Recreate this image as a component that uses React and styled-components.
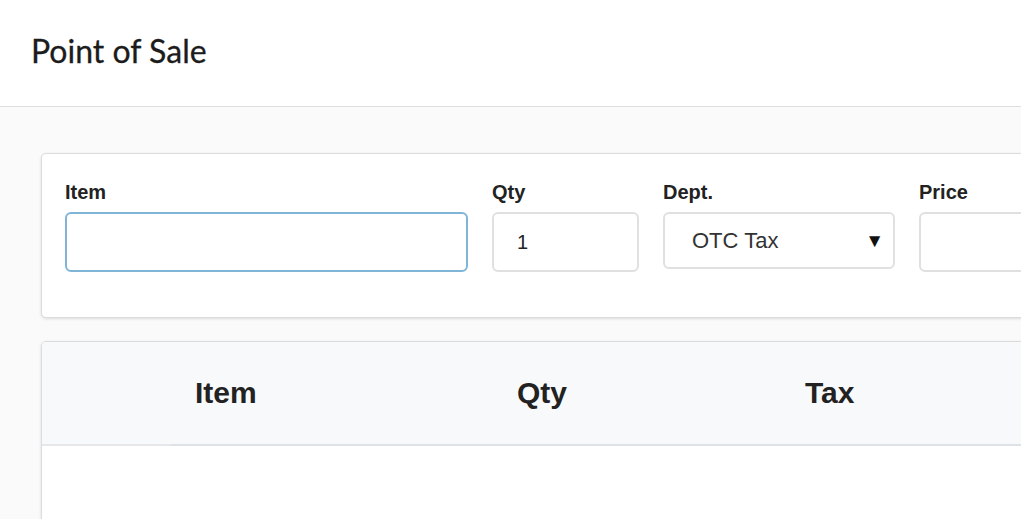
import * as React from "react"
import styled, { createGlobalStyle } from "styled-components"

const GlobalStyle = createGlobalStyle`
  html, body {
    margin: 0;
    padding: 0;
    background: #fafafa;
    font-family: "Liberation Sans", Arial, sans-serif;
    color: #212529;
    overflow: hidden;
  }
  * { box-sizing: border-box; }
`

const Header = styled.header`
  height: 107px;
  background: #fff;
  border-bottom: 1px solid #dedede;
  display: flex;
  align-items: center;
  padding: 0 31px 6px;
`

const Title = styled.h1`
  margin: 0;
  font-family: Lato, "Open Sans", sans-serif;
  font-weight: 400;
  font-size: 32px;
  color: #1c1c1c;
  -webkit-text-stroke: 0.3px #1c1c1c;
`

const Main = styled.main`
  padding: 46px 0 0 41px;
  display: flex;
  flex-direction: column;
  gap: 23px;
  width: 1100px;
`

const Card = styled.section`
  background: #fff;
  border: 1px solid #dcdcdc;
  border-radius: 5px;
  box-shadow: 0 1px 3px rgba(0, 0, 0, 0.12);
  overflow: hidden;
`

const FormRow = styled.div`
  display: flex;
  gap: 24px;
  padding: 26px 23px 45px;
`

const Field = styled.div`
  display: flex;
  flex-direction: column;
  flex: 0 0 ${p => p.$w}px;
`

const Label = styled.label`
  font-weight: 700;
  font-size: 20px;
  line-height: 24px;
  color: #222;
  margin-bottom: 8px;
`

const Input = styled.div`
  height: 60px;
  border: 2px solid ${p => (p.$focus ? "#80b5d8" : "#e0e0e0")};
  border-radius: 6px;
  padding: 0 23px;
  display: flex;
  align-items: center;
  font-size: 20px;
  color: #222;
`

const Select = styled.div`
  height: 57px;
  border: 2px solid #e0e0e0;
  border-radius: 6px;
  padding: 0 9px 0 27px;
  display: flex;
  align-items: center;
  justify-content: space-between;
  font-size: 22px;
  color: #333;
`

const Arrow = styled.span`
  font-size: 19px;
  color: #111;
`

const TableHead = styled.div`
  display: grid;
  grid-template-columns: 129px 322px 288px 1fr;
  background: #f8f9fa;
  height: 104px;
`

const HeadCell = styled.div`
  display: flex;
  align-items: center;
  padding: 0 24px;
  font-weight: 700;
  font-size: 30px;
  color: #222;
  border-bottom: 2px solid ${p => (p.$light ? "#e6e7e8" : "#dee2e6")};
`

const TableBody = styled.div`
  height: 200px;
  background: #fff;
`

export default function App() {
  return (
    <>
      <GlobalStyle />
      <Header>
        <Title>Point of Sale</Title>
      </Header>
      <Main>
        <Card>
          <FormRow>
            <Field $w={403}>
              <Label>Item</Label>
              <Input $focus />
            </Field>
            <Field $w={147}>
              <Label>Qty</Label>
              <Input>1</Input>
            </Field>
            <Field $w={232}>
              <Label>Dept.</Label>
              <Select>
                OTC Tax
                <Arrow>▼</Arrow>
              </Select>
            </Field>
            <Field $w={200}>
              <Label>Price</Label>
              <Input />
            </Field>
          </FormRow>
        </Card>
        <Card>
          <TableHead>
            <HeadCell $light />
            <HeadCell>Item</HeadCell>
            <HeadCell>Qty</HeadCell>
            <HeadCell>Tax</HeadCell>
          </TableHead>
          <TableBody />
        </Card>
      </Main>
    </>
  )
}
